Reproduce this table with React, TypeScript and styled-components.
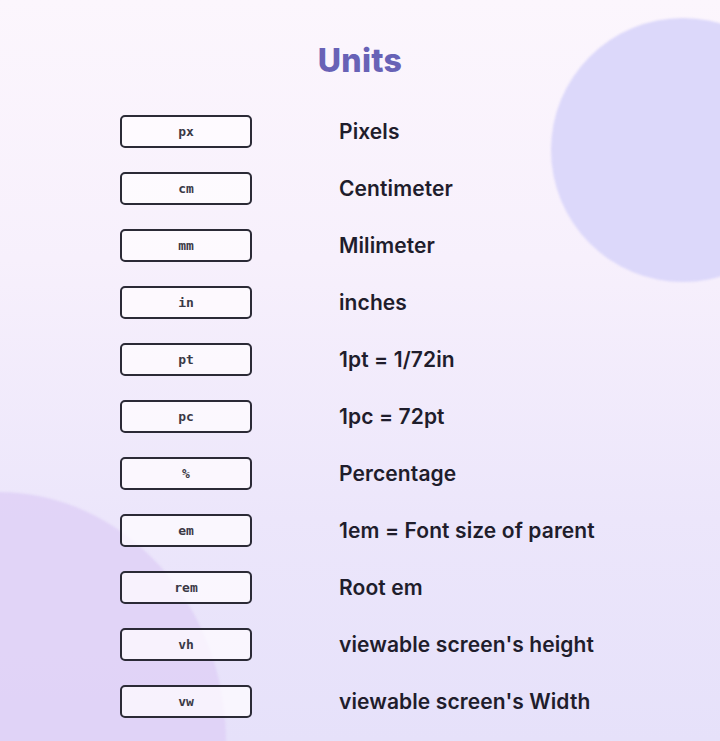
import React from "react";
import styled, { createGlobalStyle } from "styled-components";

const Global = createGlobalStyle`
  html, body { margin: 0; padding: 0; }
  body { width: 720px; height: 741px; overflow: hidden; }
`;

const Page = styled.div`
  position: relative;
  width: 720px;
  height: 741px;
  overflow: hidden;
  background: linear-gradient(180deg, #fcf6fd 0%, #f7f0fc 35%, #ece6fb 70%, #e6e1fa 100%);
  font-family: "Inter", "Open Sans", sans-serif;
`;

const Blob = styled.div<{ $x: number; $y: number; $w: number; $h: number; $c: string }>`
  position: absolute;
  left: ${(p) => p.$x}px;
  top: ${(p) => p.$y}px;
  width: ${(p) => p.$w}px;
  height: ${(p) => p.$h}px;
  border-radius: 50%;
  background: ${(p) => p.$c};
  filter: blur(1px);
`;

const Content = styled.div`
  position: relative;
  display: flex;
  flex-direction: column;
  align-items: flex-start;
  padding: 42px 0 0 120px;
`;

const Title = styled.h1`
  margin: 0 0 35px 0;
  align-self: stretch;
  padding-right: 120px;
  text-align: center;
  font-family: "Inter", sans-serif;
  font-weight: 800;
  font-size: 32px;
  line-height: 38px;
  color: #6862b6;
  letter-spacing: 0.3px;
`;

const List = styled.div`
  display: flex;
  flex-direction: column;
  gap: 24px;
`;

const Row = styled.div`
  display: flex;
  align-items: center;
  gap: 87px;
`;

const Tag = styled.div`
  box-sizing: border-box;
  width: 132px;
  height: 33px;
  border: 2px solid #2b2a36;
  border-radius: 5px;
  background: rgba(255, 252, 255, 0.75);
  display: flex;
  align-items: center;
  justify-content: center;
  font-family: "DejaVu Sans Mono", "Liberation Mono", monospace;
  font-size: 13px;
  font-weight: 600;
  color: #3a3946;
`;

const Label = styled.div`
  font-family: "Inter", sans-serif;
  font-weight: 600;
  font-size: 21px;
  color: #1f1d2c;
  letter-spacing: 0.1px;
`;

const rows: [string, string][] = [
  ["px", "Pixels"],
  ["cm", "Centimeter"],
  ["mm", "Milimeter"],
  ["in", "inches"],
  ["pt", "1pt = 1/72in"],
  ["pc", "1pc = 72pt"],
  ["%", "Percentage"],
  ["em", "1em = Font size of parent"],
  ["rem", "Root em"],
  ["vh", "viewable screen's height"],
  ["vw", "viewable screen's Width"],
];

export default function App() {
  return (
    <Page>
      <Global />
      <Blob $x={551} $y={18} $w={264} $h={264} $c="#dcd8fa" />
      <Blob $x={-230} $y={492} $w={456} $h={500} $c="rgba(222, 208, 246, 0.8)" />
      <Content>
        <Title>Units</Title>
        <List>
          {rows.map(([u, d]) => (
            <Row key={u}>
              <Tag>{u}</Tag>
              <Label>{d}</Label>
            </Row>
          ))}
        </List>
      </Content>
    </Page>
  );
}
